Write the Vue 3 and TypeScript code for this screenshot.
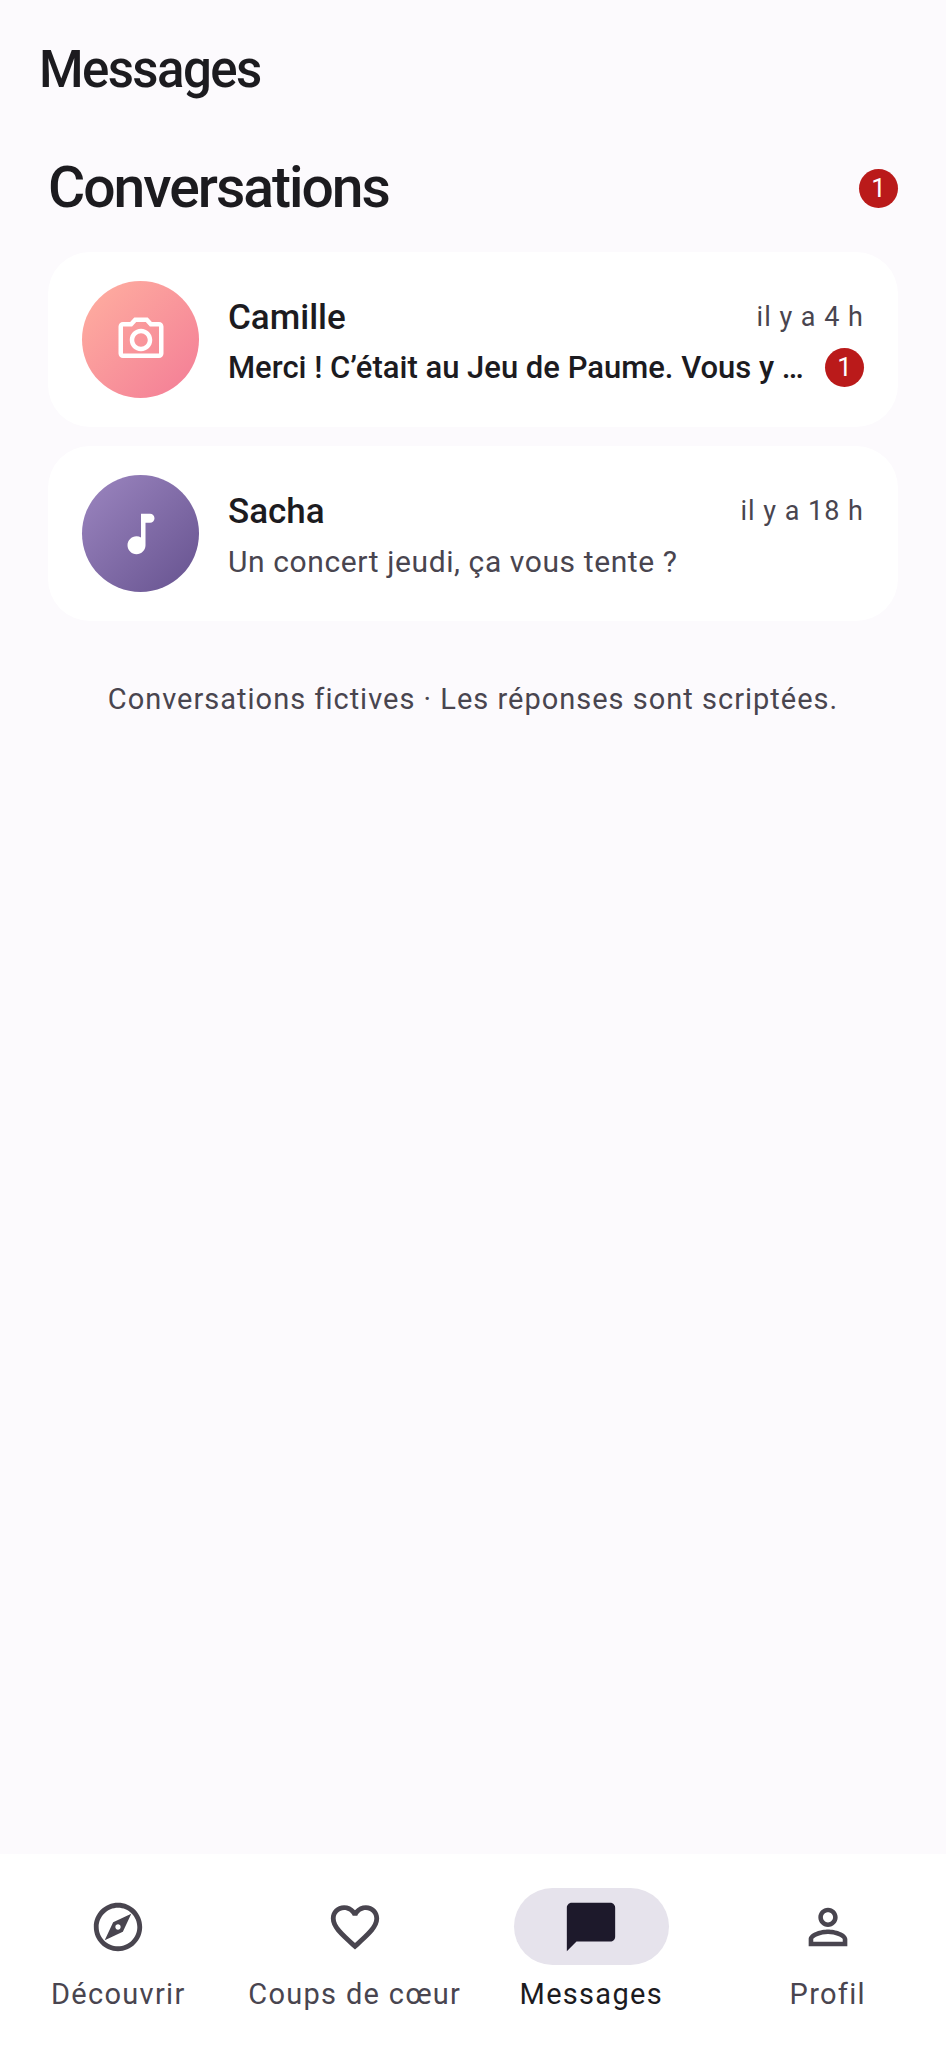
<template>
  <div class="page">
    <header class="app-bar">Messages</header>
    <main class="content">
      <div class="section-head">
        <h2 class="section-title">Conversations</h2>
        <span class="badge">1</span>
      </div>
      <div class="list">
        <div class="card" v-for="c in conversations" :key="c.name">
          <div class="avatar" :class="c.tone">
            <svg class="avatar-icon" viewBox="0 0 24 24"><path :d="c.icon" /></svg>
          </div>
          <div class="body">
            <div class="row">
              <span class="name">{{ c.name }}</span>
              <span class="time">{{ c.time }}</span>
            </div>
            <div class="row">
              <span class="preview" :class="{ unread: c.unread }">{{ c.preview }}</span>
              <span class="badge" v-if="c.unread">{{ c.unread }}</span>
            </div>
          </div>
        </div>
      </div>
      <p class="note">Conversations fictives · Les réponses sont scriptées.</p>
    </main>
    <nav class="nav">
      <div class="nav-item" v-for="t in tabs" :key="t.label" :class="{ active: t.active }">
        <div class="pill">
          <svg class="nav-icon" viewBox="0 0 24 24"><path :d="t.icon" /></svg>
        </div>
        <span class="nav-label">{{ t.label }}</span>
      </div>
    </nav>
  </div>
</template>

<script setup lang="ts">
const conversations = [
  {
    name: 'Camille',
    time: 'il y a 4 h',
    preview: 'Merci ! C’était au Jeu de Paume. Vous y …',
    unread: 1,
    tone: 'rose',
    icon: 'M14.12 4l1.83 2H20v12H4V6h4.05l1.83-2h4.24M15 2H9L7.17 4H4c-1.1 0-2 .9-2 2v12c0 1.1.9 2 2 2h16c1.1 0 2-.9 2-2V6c0-1.1-.9-2-2-2h-3.17L15 2zm-3 7c1.65 0 3 1.35 3 3s-1.35 3-3 3-3-1.35-3-3 1.35-3 3-3m0-2c-2.76 0-5 2.24-5 5s2.24 5 5 5 5-2.24 5-5-2.24-5-5-5z',
  },
  {
    name: 'Sacha',
    time: 'il y a 18 h',
    preview: 'Un concert jeudi, ça vous tente ?',
    unread: 0,
    tone: 'violet',
    icon: 'M12 3l.01 10.55c-.59-.34-1.27-.55-2.01-.55-2.21 0-4 1.79-4 4s1.79 4 4 4 4-1.79 4-4V7h2c1.1 0 2-.9 2-2s-.9-2-2-2h-4z',
  },
]

const tabs = [
  {
    label: 'Découvrir',
    icon: 'M12 2C6.48 2 2 6.48 2 12s4.48 10 10 10 10-4.48 10-10S17.52 2 12 2zm0 18c-4.41 0-8-3.59-8-8s3.59-8 8-8 8 3.59 8 8-3.59 8-8 8zm-5.5-2.5l7.51-3.49L17.5 6.5 9.99 9.99 6.5 17.5zm5.5-6.6c.61 0 1.1.49 1.1 1.1s-.49 1.1-1.1 1.1-1.1-.49-1.1-1.1.49-1.1 1.1-1.1z',
  },
  {
    label: 'Coups de cœur',
    icon: 'M16.5 3c-1.74 0-3.41.81-4.5 2.09C10.91 3.81 9.24 3 7.5 3 4.42 3 2 5.42 2 8.5c0 3.78 3.4 6.86 8.55 11.54L12 21.35l1.45-1.32C18.6 15.36 22 12.28 22 8.5 22 5.42 19.58 3 16.5 3zm-4.4 15.55l-.1.1-.1-.1C7.14 14.24 4 11.39 4 8.5 4 6.5 5.5 5 7.5 5c1.54 0 3.04.99 3.57 2.36h1.87C13.46 5.99 14.96 5 16.5 5c2 0 3.5 1.5 3.5 3.5 0 2.89-3.14 5.74-7.9 10.05z',
  },
  {
    label: 'Messages',
    active: true,
    icon: 'M20 2H4c-1.1 0-2 .9-2 2v18l4-4h14c1.1 0 2-.9 2-2V4c0-1.1-.9-2-2-2z',
  },
  {
    label: 'Profil',
    icon: 'M12 5.9c1.16 0 2.1.94 2.1 2.1s-.94 2.1-2.1 2.1S9.9 9.16 9.9 8s.94-2.1 2.1-2.1m0 9c2.97 0 6.1 1.46 6.1 2.1v1.1H5.9V17c0-.64 3.13-2.1 6.1-2.1M12 4C9.79 4 8 5.79 8 8s1.79 4 4 4 4-1.79 4-4-1.79-4-4-4zm0 9c-2.67 0-8 1.34-8 4v3h16v-3c0-2.66-5.33-4-8-4z',
  },
]
</script>

<style>
body {
  background: #fcfafd;
}
</style>

<style scoped>
.page {
  width: 946px;
  height: 2048px;
  display: flex;
  flex-direction: column;
  background: #fcfafd;
  color: #1c1b1f;
  font-family: Roboto, sans-serif;
}

.app-bar {
  padding: 40px 39px 0;
  height: 100px;
  box-sizing: border-box;
  font-size: 51px;
  line-height: 60px;
  font-weight: 500;
  letter-spacing: -1.6px;
}

.content {
  flex: 1;
  padding: 48px 48px 0;
}

.section-head {
  display: flex;
  align-items: center;
  justify-content: space-between;
  height: 80px;
  margin-bottom: 24px;
}

.section-title {
  margin: 0;
  font-size: 57px;
  line-height: 80px;
  font-weight: 500;
  letter-spacing: -2px;
}

.badge {
  flex: none;
  width: 39px;
  height: 39px;
  border-radius: 50%;
  background: #ba1a1a;
  color: #fff;
  font-size: 26px;
  line-height: 39px;
  text-align: center;
}

.list {
  display: flex;
  flex-direction: column;
  gap: 19px;
}

.card {
  height: 175px;
  box-sizing: border-box;
  padding: 0 34px;
  display: flex;
  align-items: center;
  gap: 29px;
  background: #fff;
  border-radius: 42px;
}

.avatar {
  flex: none;
  width: 117px;
  height: 117px;
  border-radius: 50%;
  display: flex;
  align-items: center;
  justify-content: center;
}

.avatar.rose {
  background: linear-gradient(135deg, #ffb0a0, #f37c96);
}

.avatar.violet {
  background: linear-gradient(135deg, #9c86c0, #66528f);
}

.avatar-icon {
  width: 54px;
  height: 54px;
  fill: #fff;
}

.body {
  flex: 1;
  min-width: 0;
  padding-top: 5px;
  display: flex;
  flex-direction: column;
  gap: 8px;
}

.row {
  display: flex;
  align-items: center;
  justify-content: space-between;
  gap: 22px;
  height: 42px;
}

.name {
  font-size: 35px;
  font-weight: 500;
}

.time {
  font-size: 27px;
  color: #49454f;
  letter-spacing: 1px;
}

.preview {
  flex: 1;
  min-width: 0;
  font-size: 30px;
  color: #49454f;
  letter-spacing: 0.6px;
  white-space: nowrap;
  overflow: hidden;
}

.preview.unread {
  color: #1c1b1f;
  font-size: 31px;
  font-weight: 500;
  letter-spacing: 0;
}

.note {
  margin: 58px 0 0;
  text-align: center;
  font-size: 29px;
  line-height: 40px;
  color: #49454f;
  letter-spacing: 1px;
}

.nav {
  height: 194px;
  box-sizing: border-box;
  padding-top: 34px;
  display: grid;
  grid-template-columns: repeat(4, 1fr);
  background: #fff;
}

.nav-item {
  display: flex;
  flex-direction: column;
  align-items: center;
}

.pill {
  width: 155px;
  height: 77px;
  border-radius: 39px;
  display: flex;
  align-items: center;
  justify-content: center;
}

.nav-icon {
  width: 58px;
  height: 58px;
  fill: #49454f;
}

.nav-label {
  margin-top: 8px;
  font-size: 29px;
  line-height: 42px;
  color: #49454f;
  letter-spacing: 1.3px;
  white-space: nowrap;
}

.active .pill {
  background: #e6e3ec;
}

.active .nav-icon {
  fill: #1d192b;
}

.active .nav-label {
  color: #1c1b1f;
}
</style>
